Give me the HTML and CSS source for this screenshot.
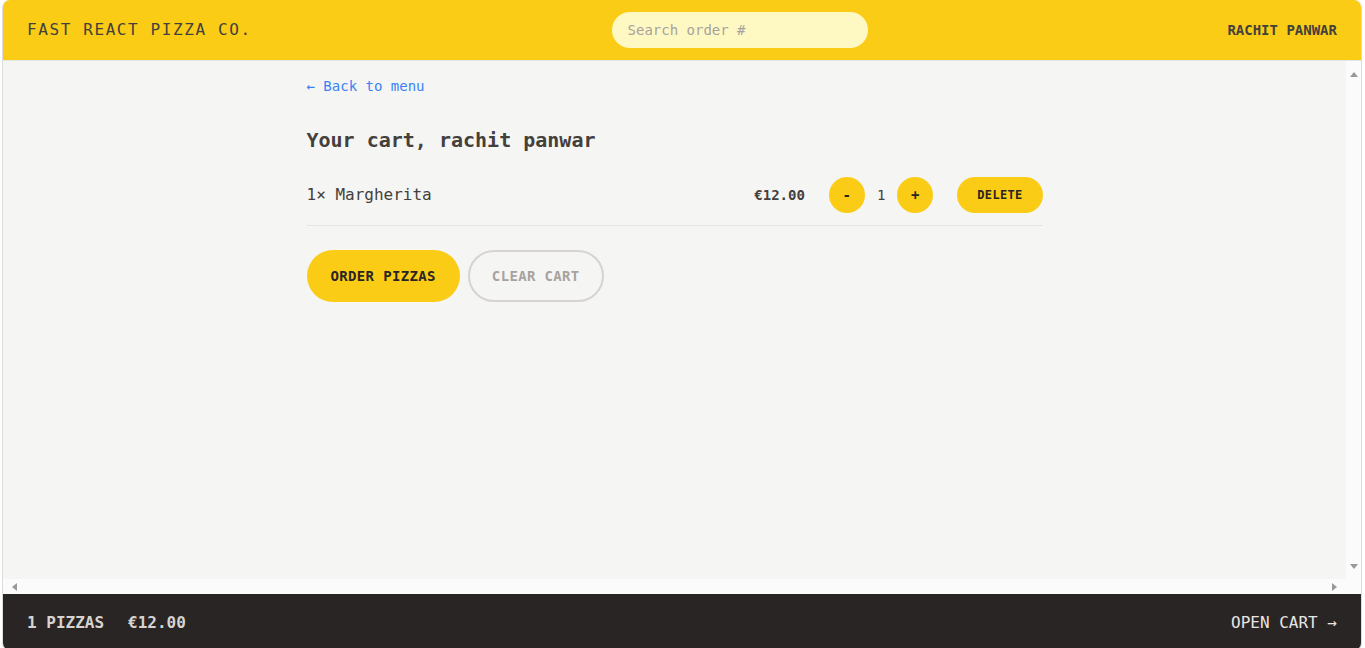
FILE: index.html
```html
<!DOCTYPE html>
<html lang="en">
<head>
<meta charset="utf-8">
<title>Fast React Pizza Co.</title>
<link rel="stylesheet" href="styles.css">
</head>
<body>
<div class="frame">
  <header class="header">
    <a class="logo" href="#">Fast React Pizza Co.</a>
    <form class="search-form">
      <input class="search" type="text" placeholder="Search order #">
    </form>
    <div class="username">rachit panwar</div>
  </header>

  <main class="main">
    <div class="viewport">
      <div class="container">
        <div class="back-wrap"><a class="back-link" href="#">&larr; Back to menu</a></div>
        <h2 class="title">Your cart, rachit panwar</h2>
        <ul class="cart-list">
          <li class="cart-item">
            <p class="item-name">1&times; Margherita</p>
            <div class="item-actions">
              <p class="item-price">€12.00</p>
              <div class="qty">
                <button class="btn btn-round">-</button>
                <span class="qty-num">1</span>
                <button class="btn btn-round">+</button>
              </div>
              <button class="btn btn-small">Delete</button>
            </div>
          </li>
        </ul>
        <div class="cart-buttons">
          <button class="btn btn-primary">Order pizzas</button>
          <button class="btn btn-secondary">Clear cart</button>
        </div>
      </div>
    </div>
    <div class="vscroll">
      <span class="arrow arrow-up"></span>
      <span class="arrow arrow-down"></span>
    </div>
    <div class="hscroll">
      <span class="arrow arrow-left"></span>
      <span class="arrow arrow-right"></span>
    </div>
    <div class="corner"></div>
  </main>

  <footer class="footer">
    <p class="summary"><span>1 pizzas</span><span>€12.00</span></p>
    <a class="open-cart" href="#">Open cart &rarr;</a>
  </footer>
</div>
</body>
</html>
```

FILE: styles.css
```css
* {
  box-sizing: border-box;
  margin: 0;
  padding: 0;
}

html, body {
  height: 100%;
  overflow: hidden;
}

body {
  background: #ffffff;
  font-family: "DejaVu Sans Mono", "Liberation Mono", monospace;
  color: #44403c;
  line-height: 1.5;
}

a {
  text-decoration: none;
  color: inherit;
}

button {
  font-family: inherit;
  border: none;
  cursor: pointer;
}

.frame {
  margin: 0 3px 0 2px;
  height: 651px;
  border: 1px solid #dcdcdc;
  border-top: none;
  border-radius: 8px;
  overflow: hidden;
  background: #f5f5f4;
  display: grid;
  grid-template-rows: auto 1fr auto;
}

/* Header */
.header {
  background: #facc15;
  border-bottom: 1px solid #e7e5e4;
  padding: 12px 24px;
  display: flex;
  align-items: center;
  justify-content: space-between;
  text-transform: uppercase;
}

.logo {
  font-size: 16px;
  letter-spacing: 0.1em;
  color: #44403c;
}

.search {
  display: block;
  width: 256px;
  height: 36px;
  border: none;
  border-radius: 9999px;
  background: #fef9c3;
  padding: 0 16px;
  font-family: inherit;
  font-size: 14px;
  color: #44403c;
  outline: none;
}

.search::placeholder {
  color: #a8a29e;
}

.username {
  font-size: 14px;
  font-weight: 700;
  color: #44403c;
}

/* Main with scrollbars */
.main {
  display: grid;
  grid-template-columns: 1fr 15px;
  grid-template-rows: 1fr 15px;
  min-height: 0;
}

.viewport {
  overflow: hidden;
  min-height: 0;
}

.vscroll,
.hscroll,
.corner {
  background: #fbfbfb;
}

.vscroll {
  display: flex;
  flex-direction: column;
  justify-content: space-between;
  align-items: center;
  padding: 11px 0 10px;
}

.hscroll {
  display: flex;
  justify-content: space-between;
  align-items: center;
  padding: 0 9px;
}

.arrow {
  width: 0;
  height: 0;
  display: block;
}

.arrow-up {
  border-left: 4.5px solid transparent;
  border-right: 4.5px solid transparent;
  border-bottom: 5px solid #999999;
}

.arrow-down {
  border-left: 4.5px solid transparent;
  border-right: 4.5px solid transparent;
  border-top: 5px solid #999999;
}

.arrow-left {
  border-top: 4.5px solid transparent;
  border-bottom: 4.5px solid transparent;
  border-right: 5px solid #999999;
}

.arrow-right {
  border-top: 4.5px solid transparent;
  border-bottom: 4.5px solid transparent;
  border-left: 5px solid #999999;
}

.container {
  max-width: 768px;
  margin: 0 auto;
  padding: 13px 16px 12px;
}

.back-link {
  font-size: 14px;
  color: #3b82f6;
}

.title {
  margin-top: 28px;
  font-size: 20px;
  line-height: 28px;
  font-weight: 700;
  color: #44403c;
}

.cart-list {
  list-style: none;
  margin-top: 11px;
  border-bottom: 1px solid #e7e5e4;
}

.cart-item {
  padding: 12px 0;
  display: flex;
  align-items: center;
  justify-content: space-between;
}

.item-name {
  font-size: 16px;
  color: #44403c;
}

.item-actions {
  display: flex;
  align-items: center;
  gap: 24px;
}

.item-price {
  font-size: 14px;
  font-weight: 700;
  color: #44403c;
}

.qty {
  display: flex;
  align-items: center;
  gap: 12px;
}

.qty-num {
  font-size: 14px;
  line-height: 20px;
  font-weight: 500;
}

.btn {
  background: #facc15;
  color: #292524;
  border-radius: 9999px;
  font-weight: 700;
  text-transform: uppercase;
  letter-spacing: 0.025em;
}

.btn-round {
  width: 36px;
  height: 36px;
  font-size: 14px;
  line-height: 20px;
}

.btn-small {
  font-size: 12px;
  line-height: 16px;
  padding: 10px 20px;
}

.cart-buttons {
  margin-top: 24px;
  display: flex;
  gap: 8px;
}

.btn-primary {
  font-size: 14px;
  line-height: 20px;
  padding: 16px 24px;
}

.btn-secondary {
  background: transparent;
  border: 2px solid #d6d3d1;
  color: #a8a29e;
  font-size: 14px;
  line-height: 20px;
  padding: 14px 22px;
}

/* Footer */
.footer {
  background: #292524;
  color: #e7e5e4;
  text-transform: uppercase;
  padding: 17px 24px 15px;
  display: flex;
  align-items: center;
  justify-content: space-between;
  font-size: 16px;
  line-height: 24px;
}

.summary {
  display: flex;
  gap: 24px;
  color: #d6d3d1;
  font-weight: 700;
}
```
